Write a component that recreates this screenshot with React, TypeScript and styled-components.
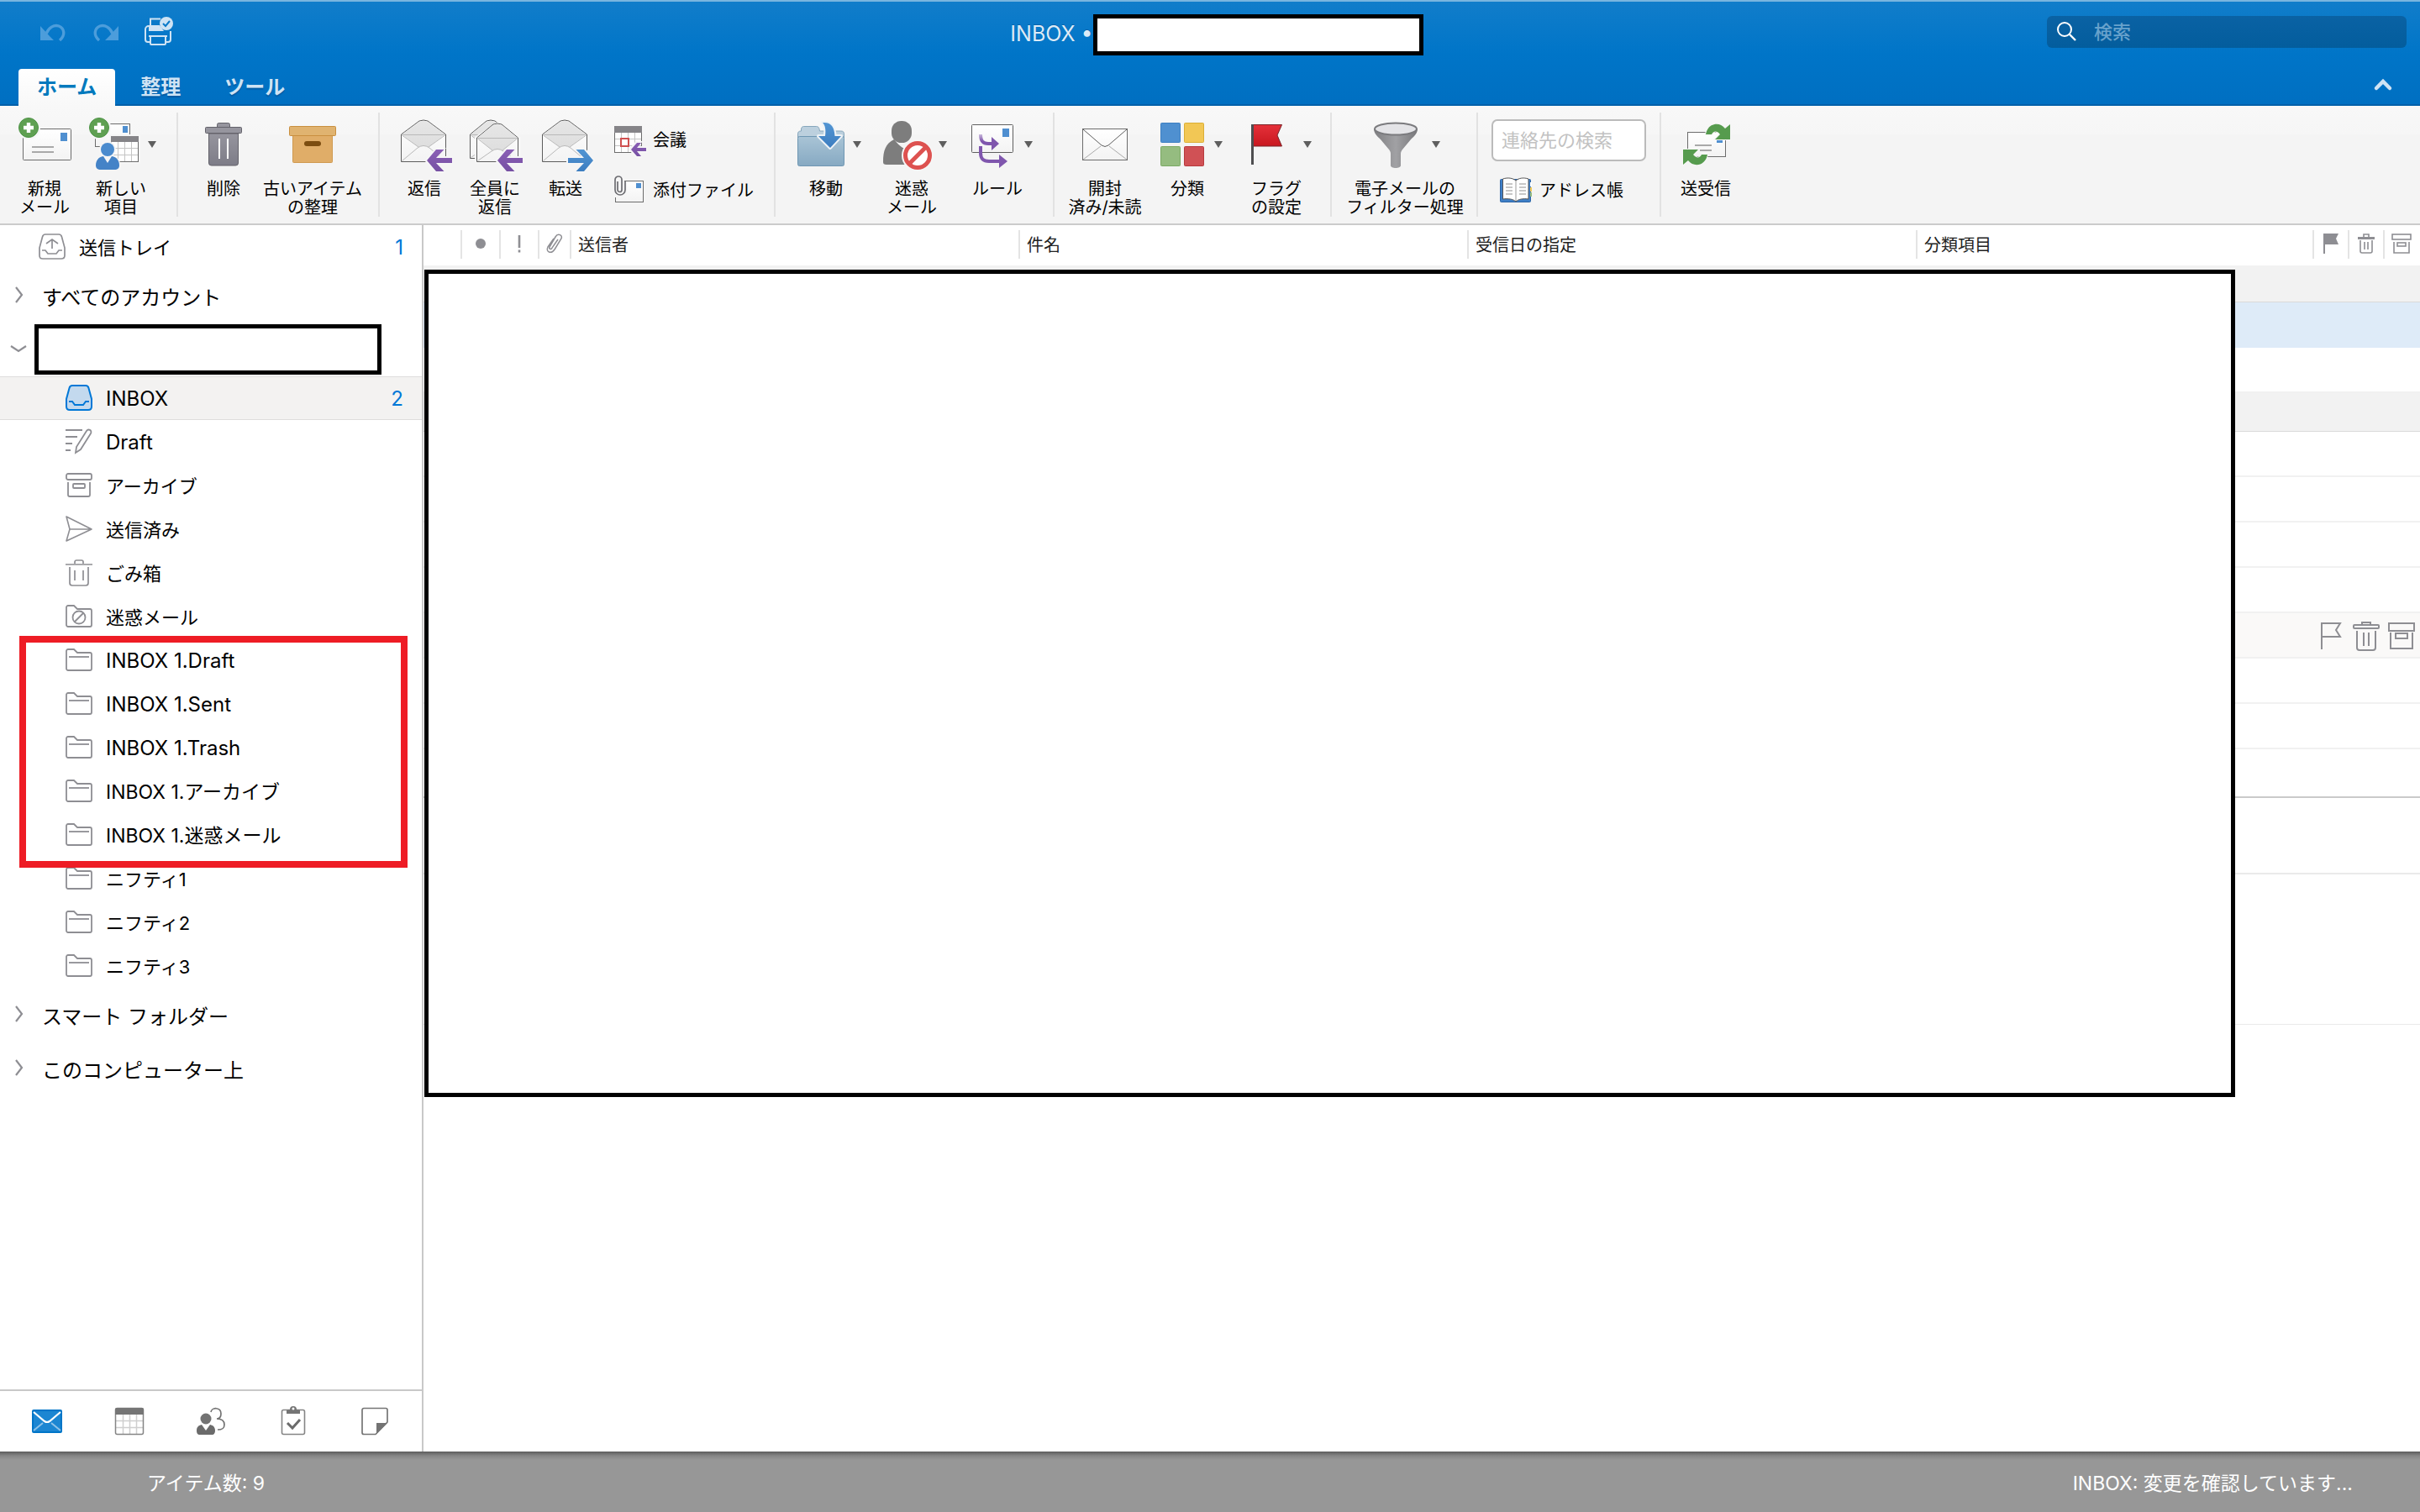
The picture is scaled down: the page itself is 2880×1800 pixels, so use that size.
import React from "react";
import styled, { createGlobalStyle } from "styled-components";

const GlobalStyle = createGlobalStyle`
  * { box-sizing: border-box; }
  body {
    margin: 0;
    background: #fff;
    color: #000;
    font-family: Inter, "Noto Sans CJK JP", sans-serif;
    font-size: 22px;
  }
  button, input {
    font: inherit;
    color: inherit;
    background: none;
    border: 0;
    padding: 0;
    margin: 0;
  }
  ul { list-style: none; margin: 0; padding: 0; }
  svg { display: block; flex: none; overflow: visible; }
`;

const Window = styled.div`
  display: flex;
  flex-direction: column;
  min-height: 100vh;
`;

/* ---------- title bar and tabs ---------- */

const Header = styled.header`
  display: flex;
  flex-direction: column;
  justify-content: space-between;
  height: 126px;
  border-top: 2px solid #7ab6df;
  background: linear-gradient(#117dca, #0075c8 50%, #006fc1);
  box-shadow: inset 0 -2px 0 #0060a9;
`;

const TitleRow = styled.div`
  display: grid;
  grid-template-columns: 1fr auto 1fr;
  align-items: start;
  padding: 15px 16px 0 32px;
`;

const QuickActions = styled.div`
  display: flex;
  align-items: center;
  gap: 29px;
  padding: 3px 0 0 14px;
  color: #cfe3f4;
`;

const QuickButton = styled.button`
  display: flex;
  &:disabled { color: #4c9ddb; }
`;

const Title = styled.h1`
  display: flex;
  align-items: center;
  margin: 0;
  color: #dcebf7;
  font-size: 25px;
  font-weight: 400;
  text-shadow: 0 -1px 0 rgba(0, 60, 120, 0.4);
`;

const TitleText = styled.span`
  padding-bottom: 3px;
`;

const TitleBox = styled.span`
  width: 393px;
  height: 49px;
  border: 5px solid #000;
  background: #fff;
`;

const SearchBox = styled.label`
  display: flex;
  align-items: center;
  justify-self: end;
  gap: 20px;
  width: 428px;
  height: 38px;
  margin-top: 2px;
  padding: 0 12px;
  border-radius: 6px;
  background: linear-gradient(#0a62a4, #035d9d);
  color: #fff;
`;

const SearchInput = styled.input`
  flex: 1;
  min-width: 0;
  font-weight: 500;
  outline: none;
  &::placeholder { color: #68a2cc; opacity: 1; }
`;

const TabRow = styled.div`
  display: flex;
  align-items: stretch;
  height: 44px;
  padding: 0 30px 0 22px;
  gap: 8px;
`;

const Tab = styled.button<{ $active?: boolean }>`
  padding: 0 22px;
  border-radius: 4px 4px 0 0;
  background: ${(p) => (p.$active ? "linear-gradient(#fff, #f8f8f8)" : "none")};
  color: ${(p) => (p.$active ? "#0079bd" : "#cfe3f4")};
  font-size: 24px;
  font-weight: 700;
  line-height: 40px;
  text-shadow: ${(p) => (p.$active ? "none" : "0 2px 1px rgba(0, 60, 120, 0.4)")};
`;

const CollapseButton = styled.button`
  display: flex;
  align-items: center;
  margin-left: auto;
  color: #cfe3f4;
`;

/* ---------- ribbon ---------- */

const Ribbon = styled.div`
  display: flex;
  height: 142px;
  border-bottom: 2px solid #cbcbcb;
  background: linear-gradient(#f8f8f8, #f6f6f6 34px, #f4f4f4 34px);
  font-size: 20px;
  line-height: 22px;
`;

const Group = styled.div<{ $gap?: number; $left?: number; $right?: number }>`
  display: flex;
  align-items: flex-start;
  gap: ${(p) => p.$gap ?? 22}px;
  margin-top: 8px;
  height: 124px;
  padding: 6px ${(p) => p.$right ?? 24}px 0 ${(p) => p.$left ?? 22}px;
  border-right: 2px solid #e2e2e2;
  &:last-child { border-right: 0; }
`;

const Tool = styled.button<{ $width?: number }>`
  display: flex;
  flex-direction: column;
  align-items: center;
  gap: 10px;
  width: ${(p) => p.$width ?? 64}px;
`;

const ToolFace = styled.span`
  display: flex;
  align-items: center;
  gap: 6px;
`;

const ToolLabel = styled.span<{ $menu?: boolean }>`
  padding-right: ${(p) => (p.$menu ? 4 : 0)}px;
  text-align: center;
  white-space: pre;
`;

const Arrow = styled.i`
  border: 5px solid transparent;
  border-top: 8px solid #5e5e5e;
  border-bottom: 0;
`;

const Stack = styled.div`
  display: flex;
  flex-direction: column;
  gap: 10px;
  padding-top: 2px;
`;

const SmallTool = styled.button<{ $indent?: number }>`
  display: flex;
  align-items: center;
  gap: 7px;
  height: 50px;
  padding-left: ${(p) => p.$indent ?? 0}px;
  white-space: nowrap;
`;

const ContactInput = styled.input`
  width: 184px;
  height: 50px;
  padding: 0 10px;
  border: 2px solid #bbb;
  border-radius: 7px;
  background: #fff;
  font-size: 22px;
  &::placeholder { color: #c2c2c2; opacity: 1; }
`;

/* ---------- sidebar ---------- */

const Body = styled.div`
  display: grid;
  grid-template-columns: 504px 1fr;
  flex: 1;
`;

const Sidebar = styled.aside`
  display: flex;
  flex-direction: column;
  border-right: 2px solid #c8c8c8;
`;

const Tree = styled.nav`
  flex: 1;
`;

const Folder = styled.button<{ $selected?: boolean; $top?: boolean }>`
  display: flex;
  align-items: center;
  gap: 16px;
  width: 100%;
  height: 52px;
  padding: 0 22px 0 ${(p) => (p.$top ? 46 : 78)}px;
  border: solid ${(p) => (p.$selected ? "#dedddc" : "transparent")};
  border-width: 1px 0;
  background: ${(p) => (p.$selected ? "#f3f2f1" : "none")};
  color: #000;
  text-align: left;
  line-height: 32px;
`;

const FolderName = styled.span<{ $size: number }>`
  padding-top: 2px;
  font-size: ${(p) => p.$size}px;
`;

const Count = styled.span`
  margin-left: auto;
  padding-top: 2px;
  color: #0078d7;
  font-size: 24px;
`;

const Marked = styled.ul`
  position: relative;
  &::after {
    content: "";
    position: absolute;
    inset: -3px 17px -13px 23px;
    border: 8px solid #ee1c25;
    pointer-events: none;
  }
`;

const Section = styled.button`
  display: flex;
  align-items: center;
  width: 100%;
  height: 64px;
  padding-left: 12px;
  gap: 18px;
  font-size: 24px;
`;

const Account = styled.div`
  display: flex;
  align-items: center;
  height: 64px;
  padding-left: 12px;
  gap: 9px;
`;

const AccountToggle = styled.button`
  display: flex;
`;

const AccountBox = styled.span`
  width: 413px;
  height: 60px;
  border: 5px solid #000;
  background: #fff;
`;

const Switcher = styled.nav`
  display: flex;
  height: 74px;
  padding: 0 6px 0 7px;
  border-top: 2px solid #c8c8c8;
`;

const SwitchButton = styled.button`
  display: flex;
  flex: 1;
  align-items: center;
  justify-content: center;
`;

/* ---------- message list ---------- */

const Main = styled.main`
  position: relative;
`;

const List = styled.table`
  width: 100%;
  table-layout: fixed;
  border-collapse: collapse;
  th, td { padding: 0; }
`;

const HeadCell = styled.th`
  height: 48px;
  font-size: 20px;
  font-weight: 400;
  color: #222;
  text-align: left;
  vertical-align: top;
`;

const HeadInner = styled.div<{ $icon?: boolean; $last?: boolean }>`
  display: flex;
  align-items: center;
  justify-content: ${(p) => (p.$icon ? "center" : "flex-start")};
  height: 34px;
  margin-top: 6px;
  padding: 0 0 2px ${(p) => (p.$icon ? 0 : 8)}px;
  border-right: ${(p) => (p.$last ? "2px solid transparent" : "2px solid #e4e4e4")};
`;

const GroupRow = styled.tr<{ $height: number }>`
  height: ${(p) => p.$height}px;
  background: #f2f2f2;
  box-shadow: inset 0 -1px 0 #d9d9d9;
`;

type RowState = "selected" | "hover" | "last";

const rowFill = { selected: "#deebf8", hover: "#faf9f8", last: "#fff" };

const MessageRow = styled.tr<{ $state?: RowState }>`
  height: 54px;
  background: ${(p) => (p.$state ? rowFill[p.$state] : "#fff")};
  box-shadow: ${(p) => (p.$state === "selected" || p.$state === "last" ? "none" : "inset 0 -2px 0 #f1f1f1")};
`;

const RowAction = styled.button`
  display: flex;
  justify-content: center;
  width: 40px;
`;

const Preview = styled.section`
  margin-top: 2px;
  border-top: 2px solid #cacaca;
`;

const PreviewHead = styled.div`
  height: 91px;
  border-bottom: 2px solid #eaeaea;
`;

const PreviewBody = styled.div`
  height: 179px;
  border-bottom: 1px solid #eaeaea;
`;

const Cover = styled.div`
  position: absolute;
  top: 53px;
  left: 1px;
  right: 220px;
  height: 985px;
  border: 5px solid #000;
  background: #fff;
`;

const StatusBar = styled.footer`
  display: flex;
  align-items: center;
  justify-content: space-between;
  height: 72px;
  padding: 0 80px 0 175px;
  background: linear-gradient(#5c5c5c, #858585 5px, #979797 10px);
  color: #fff;
  font-size: 23px;
`;

/* ---------- drawings ---------- */

const GREY = "#8e8e93";

const Icon = ({ size = 64, children }: { size?: number; children: React.ReactNode }) => (
  <svg width={size} height={size} viewBox={`0 0 ${size} ${size}`} fill="none" aria-hidden="true">
    {children}
  </svg>
);

const DefsSvg = styled.svg`
  position: absolute;
`;

const Defs = () => (
  <DefsSvg width="0" height="0" aria-hidden="true">
    <defs>
      <linearGradient id="gPaper" x1="0" y1="0" x2="0" y2="1"><stop stopColor="#fff" /><stop offset="1" stopColor="#f3f3f3" /></linearGradient>
      <linearGradient id="gFlap" x1="0" y1="0" x2="0" y2="1"><stop stopColor="#e6e6e6" /><stop offset="1" stopColor="#dedede" /></linearGradient>
      <linearGradient id="gPurple" x1="0" y1="0" x2="0" y2="1"><stop stopColor="#8a5fb5" /><stop offset="1" stopColor="#7650a3" /></linearGradient>
      <linearGradient id="gBlue" x1="0" y1="0" x2="0" y2="1"><stop stopColor="#5295d3" /><stop offset="1" stopColor="#3c7dc0" /></linearGradient>
      <linearGradient id="gFolder" x1="0" y1="0" x2="0" y2="1"><stop stopColor="#a9c4d6" /><stop offset="1" stopColor="#86a9c2" /></linearGradient>
      <linearGradient id="gBin" x1="0" y1="0" x2="0" y2="1"><stop stopColor="#96959e" /><stop offset="1" stopColor="#7d7c87" /></linearGradient>
      <linearGradient id="gFlag" x1="0" y1="0" x2="0" y2="1"><stop stopColor="#e5313a" /><stop offset="1" stopColor="#c8171f" /></linearGradient>
      <linearGradient id="gFunnel" x1="0" y1="0" x2="1" y2="0"><stop stopColor="#7f7f82" /><stop offset="0.5" stopColor="#a1a1a4" /><stop offset="1" stopColor="#78787b" /></linearGradient>
      <linearGradient id="gFade" x1="0" y1="20" x2="0" y2="36" gradientUnits="userSpaceOnUse"><stop stopColor="#7f56ad" stopOpacity="0.4" /><stop offset="0.5" stopColor="#7f56ad" /></linearGradient>
    </defs>
  </DefsSvg>
);

const Plus = ({ cx, cy }: { cx: number; cy: number }) => (
  <g>
    <circle cx={cx} cy={cy} r="11.5" fill="#5fa052" stroke="#4c9345" />
    <path d={`M${cx - 6} ${cy}h12M${cx} ${cy - 6}v12`} stroke="#fff" strokeWidth="4.4" />
  </g>
);

const NewMailIcon = () => (
  <Icon>
    <rect x="6.5" y="13.5" width="57" height="37" rx="1" fill="url(#gPaper)" stroke="#6c6c6c" />
    <rect x="51" y="18" width="8" height="10" fill="#4f8fd0" />
    <path d="M17 35h26M17 41h26" stroke="#a9a9a9" strokeWidth="2" />
    <circle cx="13" cy="12" r="14" fill="#f6f6f6" />
    <Plus cx={13} cy={12} />
  </Icon>
);

const NewItemIcon = () => (
  <Icon>
    <rect x="7.5" y="7.500" width="41" height="27" fill="url(#gPaper)" stroke="#6c6c6c" />
    <rect x="40" y="10" width="6" height="8" fill="#4f8fd0" />
    <rect x="24" y="20" width="37" height="35" fill="#f6f6f6" />
    <rect x="26.500" y="22.500" width="32" height="30" fill="#fff" stroke="#6c6c6c" />
    <path d="M26 22h33v7H26z" fill="#858488" />
    <path d="M34.500 29v23M42.500 29v23M50.500 29v23M27 36.500h31M27 44.500h31" stroke="#c4c4c4" />
    <circle cx="22" cy="38" r="10" fill="#f6f6f6" />
    <path d="M6 62c0-11 4-17 12-17h8c8 0 12 6 12 17z" fill="#f6f6f6" />
    <circle cx="22" cy="38" r="8" fill="#4a8bce" />
    <path d="M8 57c0-6 3-10 9-11l5 8 5-8c6 1 9 5 9 11 0 3-2 5-6 5H14c-4 0-6-2-6-5z" fill="#4483c7" />
    <circle cx="12" cy="12" r="14" fill="#f6f6f6" />
    <Plus cx={12} cy={12} />
  </Icon>
);

const DeleteIcon = () => (
  <Icon>
    <path d="M24.500 11V8.500a2 2 0 0 1 2-2h11a2 2 0 0 1 2 2V11" fill="#96959e" stroke="#64636b" />
    <path d="M14.500 19h35v35a3 3 0 0 1-3 3h-29a3 3 0 0 1-3-3z" fill="url(#gBin)" stroke="#64636b" />
    <rect x="10.500" y="11.500" width="43" height="7" rx="1" fill="#96959e" stroke="#64636b" />
    <path d="M27 25v24M37 25v24" stroke="#fff" strokeWidth="2" />
  </Icon>
);

const BoxIcon = () => (
  <Icon>
    <rect x="8.500" y="20.500" width="47" height="33" rx="1" fill="#e0ad68" stroke="#cf9a50" />
    <rect x="4.500" y="10.500" width="55" height="11" rx="1" fill="#e0b370" stroke="#c98f3f" />
    <rect x="22" y="28" width="20" height="6" rx="3" fill="#7c4d10" />
  </Icon>
);

const openEnvelope = (x: number, y: number, w: number, b: number) => {
  const m = x + w / 2;
  return (
    <g strokeLinejoin="round">
      <path d={`M${x} ${y + 17}L${m - 5} ${y + 1}q5-2 10 0L${x + w} ${y + 17}V${b}H${x}z`} fill="url(#gPaper)" stroke="#5d5d5d" />
      <path d={`M${x + 1} ${y + 17}L${m - 5} ${y + 2}q5-2 10 0L${x + w - 1} ${y + 17}L${m + 6} ${y + 32}q-6-3-12 0z`} fill="url(#gFlap)" />
      <path d={`M${x + 1} ${y + 17.500}h${w - 2}M${x + 1} ${y + 18}L${m - 6} ${y + 32}M${x + w - 1} ${y + 18}L${m + 6} ${y + 32}M${x + 1} ${b - 1}L${m - 7} ${y + 33}q7-5 14 0L${x + w - 1} ${b - 1}`} stroke="#b9b9b9" />
    </g>
  );
};

const BackArrow = () => (
  <g>
    <path d="M32 51L46 36h12l-9 10h17v10H49l9 10H46z" fill="#f6f6f6" />
    <path d="M35 51L46 38h9.500L46 48h19v6H46l9.500 10H46z" fill="url(#gPurple)" />
  </g>
);

const ReplyIcon = () => <Icon>{openEnvelope(4.5, 3, 53, 52.5)}<BackArrow /></Icon>;

const ReplyAllIcon = () => (
  <Icon>
    {openEnvelope(2.5, 3, 49, 48.5)}
    <path d="M8 23L33 6l6-1 24 18v32H8z" fill="#f6f6f6" />
    {openEnvelope(10.5, 7, 49, 52.5)}
    <BackArrow />
  </Icon>
);

const ForwardIcon = () => (
  <Icon>
    {openEnvelope(4.5, 3, 53, 52.5)}
    <path d="M33 46h19l-9-10h12l13 15-13 15H43l9-10H33z" fill="#f6f6f6" />
    <path d="M35 48h19L44.500 38H54l11 13-11 13h-9.500L54 54H35z" fill="url(#gBlue)" />
  </Icon>
);

const MeetingIcon = () => (
  <Icon size={40}>
    <rect x="1.500" y="3.500" width="32" height="31" fill="#fff" stroke="#6c6c6c" />
    <path d="M1 3h33v8H1z" fill="#858488" />
    <path d="M9.500 11v23M17.500 11v23M25.500 11v23M2 18.500h31M2 26.500h31" stroke="#c4c4c4" />
    <rect x="9" y="18" width="9" height="9" fill="#fff" stroke="#cf5050" strokeWidth="2" />
    <path d="M18 31l9-10h8l-5 6h10v8H30l5 6h-8z" fill="#f6f6f6" />
    <path d="M21 31l7-8h5l-5 6h11v4H28l5 6h-5z" fill="url(#gPurple)" />
  </Icon>
);

const AttachIcon = () => (
  <Icon size={40}>
    <rect x="2.500" y="8.500" width="33" height="25" fill="url(#gPaper)" stroke="#6c6c6c" />
    <rect x="27" y="11" width="6" height="6" fill="#4f8fd0" />
    <path d="M0 3h13v8h3v14l-5 3H0z" fill="#f6f6f6" />
    <path d="M10 8v11a2.500 2.500 0 0 1-5 0V9M14 9v10a6 6 0 0 1-12 0V7a4 4 0 0 1 8 0v4" stroke="#6d6d72" strokeWidth="1.700" />
  </Icon>
);

const MoveIcon = () => (
  <Icon>
    <path d="M4.500 24V20c0-3 1-4 4-4v-2c0-2 1-3.500 3-3.500h15c2 0 3 1 3.500 3l.5 2.500h25c3 0 4 1 4 4v4z" fill="#bcd0de" stroke="#86a6bc" />
    <rect x="4.500" y="22.500" width="55" height="35" rx="2" fill="url(#gFolder)" stroke="#6f97b3" />
    <path d="M34 6c10-1 14 5 14.500 16H56L43 36 29 22h8c1-8 0-13-3-16z" fill="url(#gBlue)" stroke="#eef3f7" strokeWidth="4" strokeLinejoin="round" />
    <path d="M34 6c10-1 14 5 14.500 16H56L43 36 29 22h8c1-8 0-13-3-16z" fill="url(#gBlue)" />
  </Icon>
);

const JunkIcon = () => (
  <Icon>
    <rect x="14" y="4" width="24" height="26" rx="11.500" fill="#7d7d7d" />
    <path d="M4 53c0-14 3-22 13-27 7 9 13 12 17 12l2 18H8c-3 0-4-1-4-3z" fill="#7d7d7d" />
    <circle cx="45" cy="45" r="19" fill="#f6f6f6" />
    <circle cx="45" cy="45" r="14.500" fill="#fff" stroke="#dd5250" strokeWidth="5" />
    <path d="M35 55l20-20" stroke="#dd5250" strokeWidth="5" />
  </Icon>
);

const RulesIcon = () => (
  <Icon>
    <rect x="7.500" y="8.500" width="49" height="33" rx="1" fill="url(#gPaper)" stroke="#5f5f5f" />
    <rect x="44" y="13" width="8" height="10" fill="#4f8fd0" />
    <path d="M18 20c0 8 3 11 9 11h5" stroke="url(#gFade)" strokeWidth="4" />
    <path d="M31 23l9 8-9 8z" fill="#7f56ad" />
    <path d="M18 34v8c0 7 3 10 10 10h13" stroke="#7f56ad" strokeWidth="4" />
    <path d="M40 44l10 8-10 8z" fill="#7f56ad" />
  </Icon>
);

const ReadIcon = () => (
  <Icon>
    <rect x="5.500" y="13.500" width="53" height="37" fill="url(#gPaper)" stroke="#6c6c6c" />
    <path d="M6 50l21-16M58 50L37 34" stroke="#aaa" />
    <path d="M6 14l22 19q4 3 8 0l22-19" stroke="#5f5f5f" />
  </Icon>
);

const CategoryIcon = () => (
  <Icon>
    <rect x="6.500" y="6.500" width="23" height="23" rx="1" fill="#4f90d0" stroke="#3d7fc2" />
    <rect x="34.500" y="6.500" width="23" height="23" rx="1" fill="#f2c755" stroke="#dbae35" />
    <rect x="6.500" y="34.500" width="23" height="23" rx="1" fill="#95bc80" stroke="#7ba964" />
    <rect x="34.500" y="34.500" width="23" height="23" rx="1" fill="#d05155" stroke="#b73a3e" />
  </Icon>
);

const FlagIcon = () => (
  <Icon>
    <path d="M10 8.500h34.500L39 21l5.500 13H10z" fill="url(#gFlag)" stroke="#7b2428" />
    <path d="M9.500 8v48" stroke="#4e4e50" strokeWidth="3" />
  </Icon>
);

const FilterIcon = () => (
  <Icon>
    <path d="M1 13c0 6 4 9 8 13l10 12c1 1 2 3 2 5v14c0 4 12 4 12 0V43c0-2 1-4 2-5l10-12c4-4 8-7 8-13z" fill="url(#gFunnel)" />
    <ellipse cx="27" cy="13.500" rx="25" ry="7" fill="#e4e4e7" stroke="#7b7b7e" strokeWidth="2" />
  </Icon>
);

const BookIcon = () => (
  <Icon size={40}>
    <rect x="0.500" y="6.500" width="36" height="27" rx="1" fill="#3f7fc6" stroke="#2c64a6" />
    <path d="M36 10h2v5h-2z" fill="#fff" /><path d="M36 16h2v5h-2z" fill="#f2c755" /><path d="M36 22h2v5h-2z" fill="#95bc80" />
    <path d="M3.500 6c6-2 12-1 15.500 2 3.500-3 9-4 15-2v24c-6-1-12 0-15 3-3-3-9-4-15.500-3z" fill="#fff" stroke="#555" />
    <path d="M19 8v24" stroke="#9a9a9a" />
    <path d="M7 12h8M7 16h8M7 20h8M7 24h8M23 12h8M23 16h8M23 20h8M23 24h8" stroke="#b5b5b5" strokeWidth="1.500" />
  </Icon>
);

const SyncIcon = () => (
  <Icon>
    <rect x="10.500" y="17.500" width="45" height="29" fill="url(#gPaper)" stroke="#6c6c6c" />
    <path d="M45 27h7v3h-7z" fill="#4f8fd0" />
    <path d="M19 33h20M25 39h14" stroke="#a9a9a9" strokeWidth="2" />
    <path d="M32 20C34 7 48 4 55 13l6-5v18H43l6-6c-4-5-8-4-10 0z" fill="#569b4e" stroke="#f6f6f6" strokeWidth="2" paintOrder="stroke" />
    <path d="M34 44C32 57 18 60 11 51l-6 5V38h18l-6 6c4 5 8 4 10 0z" fill="#569b4e" stroke="#f6f6f6" strokeWidth="2" paintOrder="stroke" />
  </Icon>
);

const UndoIcon = ({ flip }: { flip?: boolean }) => (
  <Icon size={34}>
    <g transform={flip ? "translate(34 0) scale(-1 1)" : undefined}>
      <path d="M2 11v17h16l-5.500-5.500z" fill="currentColor" />
      <path d="M9 20c3-7 9-11 15-9 7 3 8 11 1 17" stroke="currentColor" strokeWidth="3.400" />
    </g>
  </Icon>
);

const PrintIcon = () => (
  <Icon size={34}>
    <path d="M7 10V2.500h12M7 30H4a3 3 0 0 1-3-3V15a4 4 0 0 1 4-4M25 30h3a3 3 0 0 0 3-3V17" stroke="currentColor" strokeWidth="2" />
    <path d="M5 10h13l5 7H5z" fill="currentColor" />
    <rect x="7" y="23" width="18" height="10" rx="1" stroke="currentColor" strokeWidth="2" />
    <path d="M5 23h22" stroke="currentColor" strokeWidth="2" />
    <circle cx="26" cy="8" r="8" fill="currentColor" />
    <path d="M22 8l3 3 5-6" stroke="#0b79c8" strokeWidth="2" />
  </Icon>
);

const Glass = () => (
  <Icon size={24}>
    <circle cx="9" cy="9" r="8" stroke="currentColor" strokeWidth="2" />
    <path d="M15 15l7 7" stroke="currentColor" strokeWidth="2.400" />
  </Icon>
);

const Chevron = ({ turn }: { turn: "right" | "down" }) => (
  <Icon size={20}>
    <path d={turn === "right" ? "M7 0l7 9-7 9" : "M1 6l9 6 9-6"} stroke={GREY} strokeWidth="2.200" />
  </Icon>
);

type Kind = "outbox" | "inbox" | "draft" | "archive" | "sent" | "trash" | "junk" | "folder";

const FolderShape = ({ kind }: { kind: Kind }) => {
  switch (kind) {
    case "outbox":
    case "inbox": {
      const on = kind === "inbox";
      return (
        <g stroke={on ? "#0078d7" : GREY} strokeWidth={on ? 2 : 1.7}>
          <path d="M8 1h16c2 0 3 1 3.500 3L31 17v9c0 3-1 4-4 4H5c-3 0-4-1-4-4v-9L4.500 4C5 2 6 1 8 1z" fill={on ? "#c3d9ee" : "none"} />
          <path d="M4 20h4l3 4h10l3-4h4" />
          {!on && <path d="M16 18V7M9 12l7-5 7 5" />}
        </g>
      );
    }
    case "draft":
      return <path d="M0 2h20M0 10h14M0 18h8M0 26h6M12 29l1-7L25 3c2-3 7-1 5 3L18 25z" stroke={GREY} strokeWidth="1.800" />;
    case "archive":
      return (
        <g stroke={GREY} strokeWidth="1.800">
          <rect x="1" y="2" width="30" height="7" rx="2" />
          <path d="M3 12v15a2 2 0 0 0 2 2h22a2 2 0 0 0 2-2V12" />
          <rect x="9" y="14" width="14" height="5" rx="1" />
        </g>
      );
    case "sent":
      return <path d="M1 1l30 15L1 30l4-14zM5 16h26" stroke={GREY} strokeWidth="1.600" strokeLinejoin="round" />;
    case "trash":
      return <path d="M0 6h32M11 5V3a2 2 0 0 1 2-2h6a2 2 0 0 1 2 2v2M5 9v19a3 3 0 0 0 3 3h16a3 3 0 0 0 3-3V9M11 13v12M21 13v12" stroke={GREY} strokeWidth="1.700" />;
    default:
      return (
        <g stroke={GREY} strokeWidth="1.800">
          <path d="M1 5a2 2 0 0 1 2-2h7l4 4h15a2 2 0 0 1 2 2v17a2 2 0 0 1-2 2H3a2 2 0 0 1-2-2z" />
          {kind === "folder" ? <path d="M4 12h24" /> : <><circle cx="16" cy="17" r="7.500" /><path d="M11 22l10-10" /></>}
        </g>
      );
  }
};

const RowFlag = () => <Icon size={32}><path d="M5 32V1h22l-5 8 5 8H5" stroke={GREY} strokeWidth="2" /></Icon>;
const RowTrash = () => (
  <Icon size={32}>
    <g stroke={GREY} strokeWidth="2">
      <rect x="1" y="3" width="30" height="4" rx="1" /><path d="M11 3V0h10v3M5 10v20a3 3 0 0 0 3 3h16a3 3 0 0 0 3-3V10M13 12v16M19 12v16" />
    </g>
  </Icon>
);
const RowArchive = () => (
  <Icon size={32}>
    <g stroke={GREY} strokeWidth="2">
      <rect x="1" y="1" width="30" height="9" /><path d="M3 12v19h26V12" /><rect x="9" y="13" width="14" height="6" />
    </g>
  </Icon>
);

const HeadDot = () => <Icon size={24}><circle cx="12" cy="12" r="6" fill={GREY} /></Icon>;
const HeadBang = () => <Icon size={24}><path d="M12 2v15M12 19.500v3" stroke={GREY} strokeWidth="2.600" /></Icon>;
const HeadClip = () => (
  <Icon size={24}>
    <path d="M16 7l-7 10c-1 3-4 1-3-1L13 4c3-5 9-2 7 2l-8 13c-4 6-11 3-8-3l7-10" stroke={GREY} strokeWidth="1.500" />
  </Icon>
);
const HeadFlag = () => <Icon size={24}><path d="M3 24V0h18l-3 6 3 7H5v11z" fill={GREY} /></Icon>;
const HeadTrash = () => (
  <Icon size={24}>
    <path d="M2 5.500h20" stroke={GREY} strokeWidth="3" /><path d="M9 4V1h6v3M5 8v13a2 2 0 0 0 2 2h10a2 2 0 0 0 2-2V8M10 10v9M14 10v9" stroke={GREY} strokeWidth="1.600" />
  </Icon>
);
const HeadArchive = () => (
  <Icon size={24}>
    <g stroke={GREY} strokeWidth="1.600"><rect x="1" y="1" width="22" height="6" /><path d="M3 10v13h18V10" /><rect x="7" y="11" width="10" height="4" /></g>
  </Icon>
);

const MailNav = () => (
  <Icon size={36}>
    <rect x="1" y="5" width="34" height="26" rx="1" fill="#1c86d2" stroke="#0075c8" strokeWidth="2" />
    <path d="M2 29l11-9M34 29l-11-9" stroke="#8fc2e8" strokeWidth="2" />
    <path d="M2 7l13 11q3 2 6 0L34 7" stroke="#fff" strokeWidth="2.200" />
  </Icon>
);
const CalendarNav = () => (
  <Icon size={36}>
    <path d="M10.500 10v23M18.500 10v23M26.500 10v23M2 17.500h32M2 25.500h32" stroke="#cfcfcf" strokeWidth="1.500" />
    <rect x="1.500" y="2.500" width="33" height="31" rx="2" stroke="#858585" strokeWidth="1.500" />
    <path d="M1 4a2 2 0 0 1 2-2h30a2 2 0 0 1 2 2v6H1z" fill="#757575" />
  </Icon>
);
const PeopleNav = () => (
  <Icon size={36}>
    <circle cx="12" cy="15" r="6.500" fill="#737373" />
    <path d="M1 29c0-4 2-6 6-7l5 7 5-7c4 1 6 3 6 7 0 3-1 5-4 5H5c-3 0-4-2-4-5z" fill="#6b6b6b" />
    <path d="M18 7c1-6 12-6 12 2 0 4-2 6-5 6 6 0 9 3 9 7 0 5-3 6-8 6" stroke="#737373" strokeWidth="1.700" />
  </Icon>
);
const TasksNav = () => (
  <Icon size={36}>
    <rect x="4.500" y="4.500" width="27" height="29" rx="2" stroke="#858585" strokeWidth="1.600" />
    <path d="M10 9V5l4-1a4 4 0 0 1 8 0l4 1v4z" fill="#757575" /><circle cx="18" cy="3" r="1.500" fill="#fff" />
    <path d="M11 20l6 6 9-10" stroke="#6b6b6b" strokeWidth="3" />
  </Icon>
);
const NotesNav = () => (
  <Icon size={36}>
    <path d="M2 4.500A2 2 0 0 1 4 2.500h26a2 2 0 0 1 2 2V19L18 33.500H4a2 2 0 0 1-2-2z" stroke="#757575" strokeWidth="1.700" />
    <path d="M32 20H19v13z" fill="#737373" />
  </Icon>
);

/* ---------- composed parts ---------- */

const RibbonTool = ({ icon, label, menu, width }: { icon: React.ReactNode; label: string; menu?: boolean; width?: number }) => (
  <Tool type="button" $width={width ?? (menu ? 80 : 64)}>
    <ToolFace>{icon}{menu && <Arrow />}</ToolFace>
    <ToolLabel $menu={menu}>{label}</ToolLabel>
  </Tool>
);

/* Latin names are set larger so that they look even beside kana and kanji. */
const nameSize = (name: string) => (/^[\x20-\x7e]+$/.test(name) ? 24 : /[A-Z]/.test(name) ? 23 : 22);

const FolderRow = ({ kind, name, count, selected, top }: { kind: Kind; name: string; count?: number; selected?: boolean; top?: boolean }) => (
  <li>
    <Folder type="button" $selected={selected} $top={top}>
      <Icon size={32}><FolderShape kind={kind} /></Icon>
      <FolderName $size={nameSize(name)}>{name}</FolderName>
      {count !== undefined && <Count>{count}</Count>}
    </Folder>
  </li>
);

const columns: { width?: number; label: string; icon?: React.ReactNode }[] = [
  { width: 46, label: "" },
  { width: 46, label: "未読", icon: <HeadDot /> },
  { width: 46, label: "重要度", icon: <HeadBang /> },
  { width: 38, label: "添付", icon: <HeadClip /> },
  { width: 534, label: "送信者" },
  { width: 534, label: "件名" },
  { width: 534, label: "受信日の指定" },
  { label: "分類項目" },
  { width: 42, label: "フラグ", icon: <HeadFlag /> },
  { width: 42, label: "削除", icon: <HeadTrash /> },
  { width: 42, label: "アーカイブ", icon: <HeadArchive /> },
];

const Message = ({ state }: { state?: RowState }) => (
  <MessageRow $state={state}>
    <td colSpan={8} />
    <td>{state === "hover" && <RowAction type="button" aria-label="フラグ"><RowFlag /></RowAction>}</td>
    <td>{state === "hover" && <RowAction type="button" aria-label="削除"><RowTrash /></RowAction>}</td>
    <td>{state === "hover" && <RowAction type="button" aria-label="アーカイブ"><RowArchive /></RowAction>}</td>
  </MessageRow>
);

export default function App() {
  return (
    <Window>
      <GlobalStyle />
      <Defs />
      <Header>
        <TitleRow>
          <QuickActions>
            <QuickButton type="button" disabled aria-label="元に戻す"><UndoIcon /></QuickButton>
            <QuickButton type="button" disabled aria-label="やり直し"><UndoIcon flip /></QuickButton>
            <QuickButton type="button" aria-label="印刷"><PrintIcon /></QuickButton>
          </QuickActions>
          <Title><TitleText>INBOX •</TitleText><TitleBox /></Title>
          <SearchBox>
            <Glass />
            <SearchInput type="search" placeholder="検索" aria-label="検索" />
          </SearchBox>
        </TitleRow>
        <TabRow>
          <Tab type="button" $active>ホーム</Tab>
          <Tab type="button">整理</Tab>
          <Tab type="button">ツール</Tab>
          <CollapseButton type="button" aria-label="リボンを折りたたむ">
            <Icon size={28}><path d="M6 15l8-8 8 8" stroke="currentColor" strokeWidth="4.500" strokeLinecap="round" /></Icon>
          </CollapseButton>
        </TabRow>
      </Header>

      <Ribbon>
        <Group $left={21} $gap={21}>
          <RibbonTool icon={<NewMailIcon />} label={"新規\nメール"} />
          <RibbonTool icon={<NewItemIcon />} label={"新しい\n項目"} menu />
        </Group>
        <Group $gap={14} $right={18}>
          <RibbonTool icon={<DeleteIcon />} label="削除" />
          <RibbonTool icon={<BoxIcon />} label={"古いアイテム\nの整理"} width={120} />
        </Group>
        <Group $left={21} $gap={20} $right={24}>
          <RibbonTool icon={<ReplyIcon />} label="返信" />
          <RibbonTool icon={<ReplyAllIcon />} label={"全員に\n返信"} />
          <RibbonTool icon={<ForwardIcon />} label="転送" />
          <Stack>
            <SmallTool type="button" $indent={5}><MeetingIcon />会議</SmallTool>
            <SmallTool type="button" $indent={5}><AttachIcon />添付ファイル</SmallTool>
          </Stack>
        </Group>
        <Group>
          <RibbonTool icon={<MoveIcon />} label="移動" menu />
          <RibbonTool icon={<JunkIcon />} label={"迷惑\nメール"} menu />
          <RibbonTool icon={<RulesIcon />} label="ルール" menu />
        </Group>
        <Group $gap={16} $left={16} $right={12}>
          <RibbonTool icon={<ReadIcon />} label={"開封\n済み/未読"} width={88} />
          <RibbonTool icon={<CategoryIcon />} label="分類" menu />
          <RibbonTool icon={<FlagIcon />} label={"フラグ\nの設定"} menu width={100} />
        </Group>
        <Group $left={17} $right={11}>
          <RibbonTool icon={<FilterIcon />} label={"電子メールの\nフィルター処理"} menu width={144} />
        </Group>
        <Group $left={16} $right={16}>
          <Stack>
            <ContactInput type="text" placeholder="連絡先の検索" aria-label="連絡先の検索" />
            <SmallTool type="button" $indent={10}><BookIcon />アドレス帳</SmallTool>
          </Stack>
        </Group>
        <Group $left={21}>
          <RibbonTool icon={<SyncIcon />} label="送受信" />
        </Group>
      </Ribbon>

      <Body>
        <Sidebar>
          <Tree>
            <ul><FolderRow kind="outbox" name="送信トレイ" count={1} top /></ul>
            <Section type="button"><Chevron turn="right" />すべてのアカウント</Section>
            <Account>
              <AccountToggle type="button" aria-label="アカウント"><Chevron turn="down" /></AccountToggle>
              <AccountBox />
            </Account>
            <ul>
              <FolderRow kind="inbox" name="INBOX" count={2} selected />
              <FolderRow kind="draft" name="Draft" />
              <FolderRow kind="archive" name="アーカイブ" />
              <FolderRow kind="sent" name="送信済み" />
              <FolderRow kind="trash" name="ごみ箱" />
              <FolderRow kind="junk" name="迷惑メール" />
            </ul>
            <Marked>
              {["Draft", "Sent", "Trash", "アーカイブ", "迷惑メール"].map((n) => (
                <FolderRow key={n} kind="folder" name={`INBOX 1.${n}`} />
              ))}
            </Marked>
            <ul>
              {[1, 2, 3].map((n) => <FolderRow key={n} kind="folder" name={`ニフティ${n}`} />)}
            </ul>
            <Section type="button"><Chevron turn="right" />スマート フォルダー</Section>
            <Section type="button"><Chevron turn="right" />このコンピューター上</Section>
          </Tree>
          <Switcher>
            <SwitchButton type="button" aria-label="メール"><MailNav /></SwitchButton>
            <SwitchButton type="button" aria-label="予定表"><CalendarNav /></SwitchButton>
            <SwitchButton type="button" aria-label="連絡先"><PeopleNav /></SwitchButton>
            <SwitchButton type="button" aria-label="タスク"><TasksNav /></SwitchButton>
            <SwitchButton type="button" aria-label="メモ"><NotesNav /></SwitchButton>
          </Switcher>
        </Sidebar>

        <Main>
          <List>
            <colgroup>
              {columns.map((c, i) => <col key={i} width={c.width} />)}
            </colgroup>
            <thead>
              <tr>
                {columns.map((c, i) => (
                  <HeadCell key={i} scope="col" aria-label={c.label || undefined}>
                    <HeadInner $icon={!!c.icon} $last={i === columns.length - 1}>{c.icon ?? c.label}</HeadInner>
                  </HeadCell>
                ))}
              </tr>
            </thead>
            <tbody>
              <GroupRow $height={44}><td colSpan={11} /></GroupRow>
              <Message state="selected" />
              <Message />
              <GroupRow $height={46}><td colSpan={11} /></GroupRow>
              <Message />
              <Message />
              <Message />
              <Message />
              <Message state="hover" />
              <Message />
              <Message />
              <Message state="last" />
            </tbody>
          </List>
          <Preview>
            <PreviewHead />
            <PreviewBody />
          </Preview>
          <Cover />
        </Main>
      </Body>

      <StatusBar>
        <span>アイテム数: 9</span>
        <span>INBOX: 変更を確認しています...</span>
      </StatusBar>
    </Window>
  );
}
